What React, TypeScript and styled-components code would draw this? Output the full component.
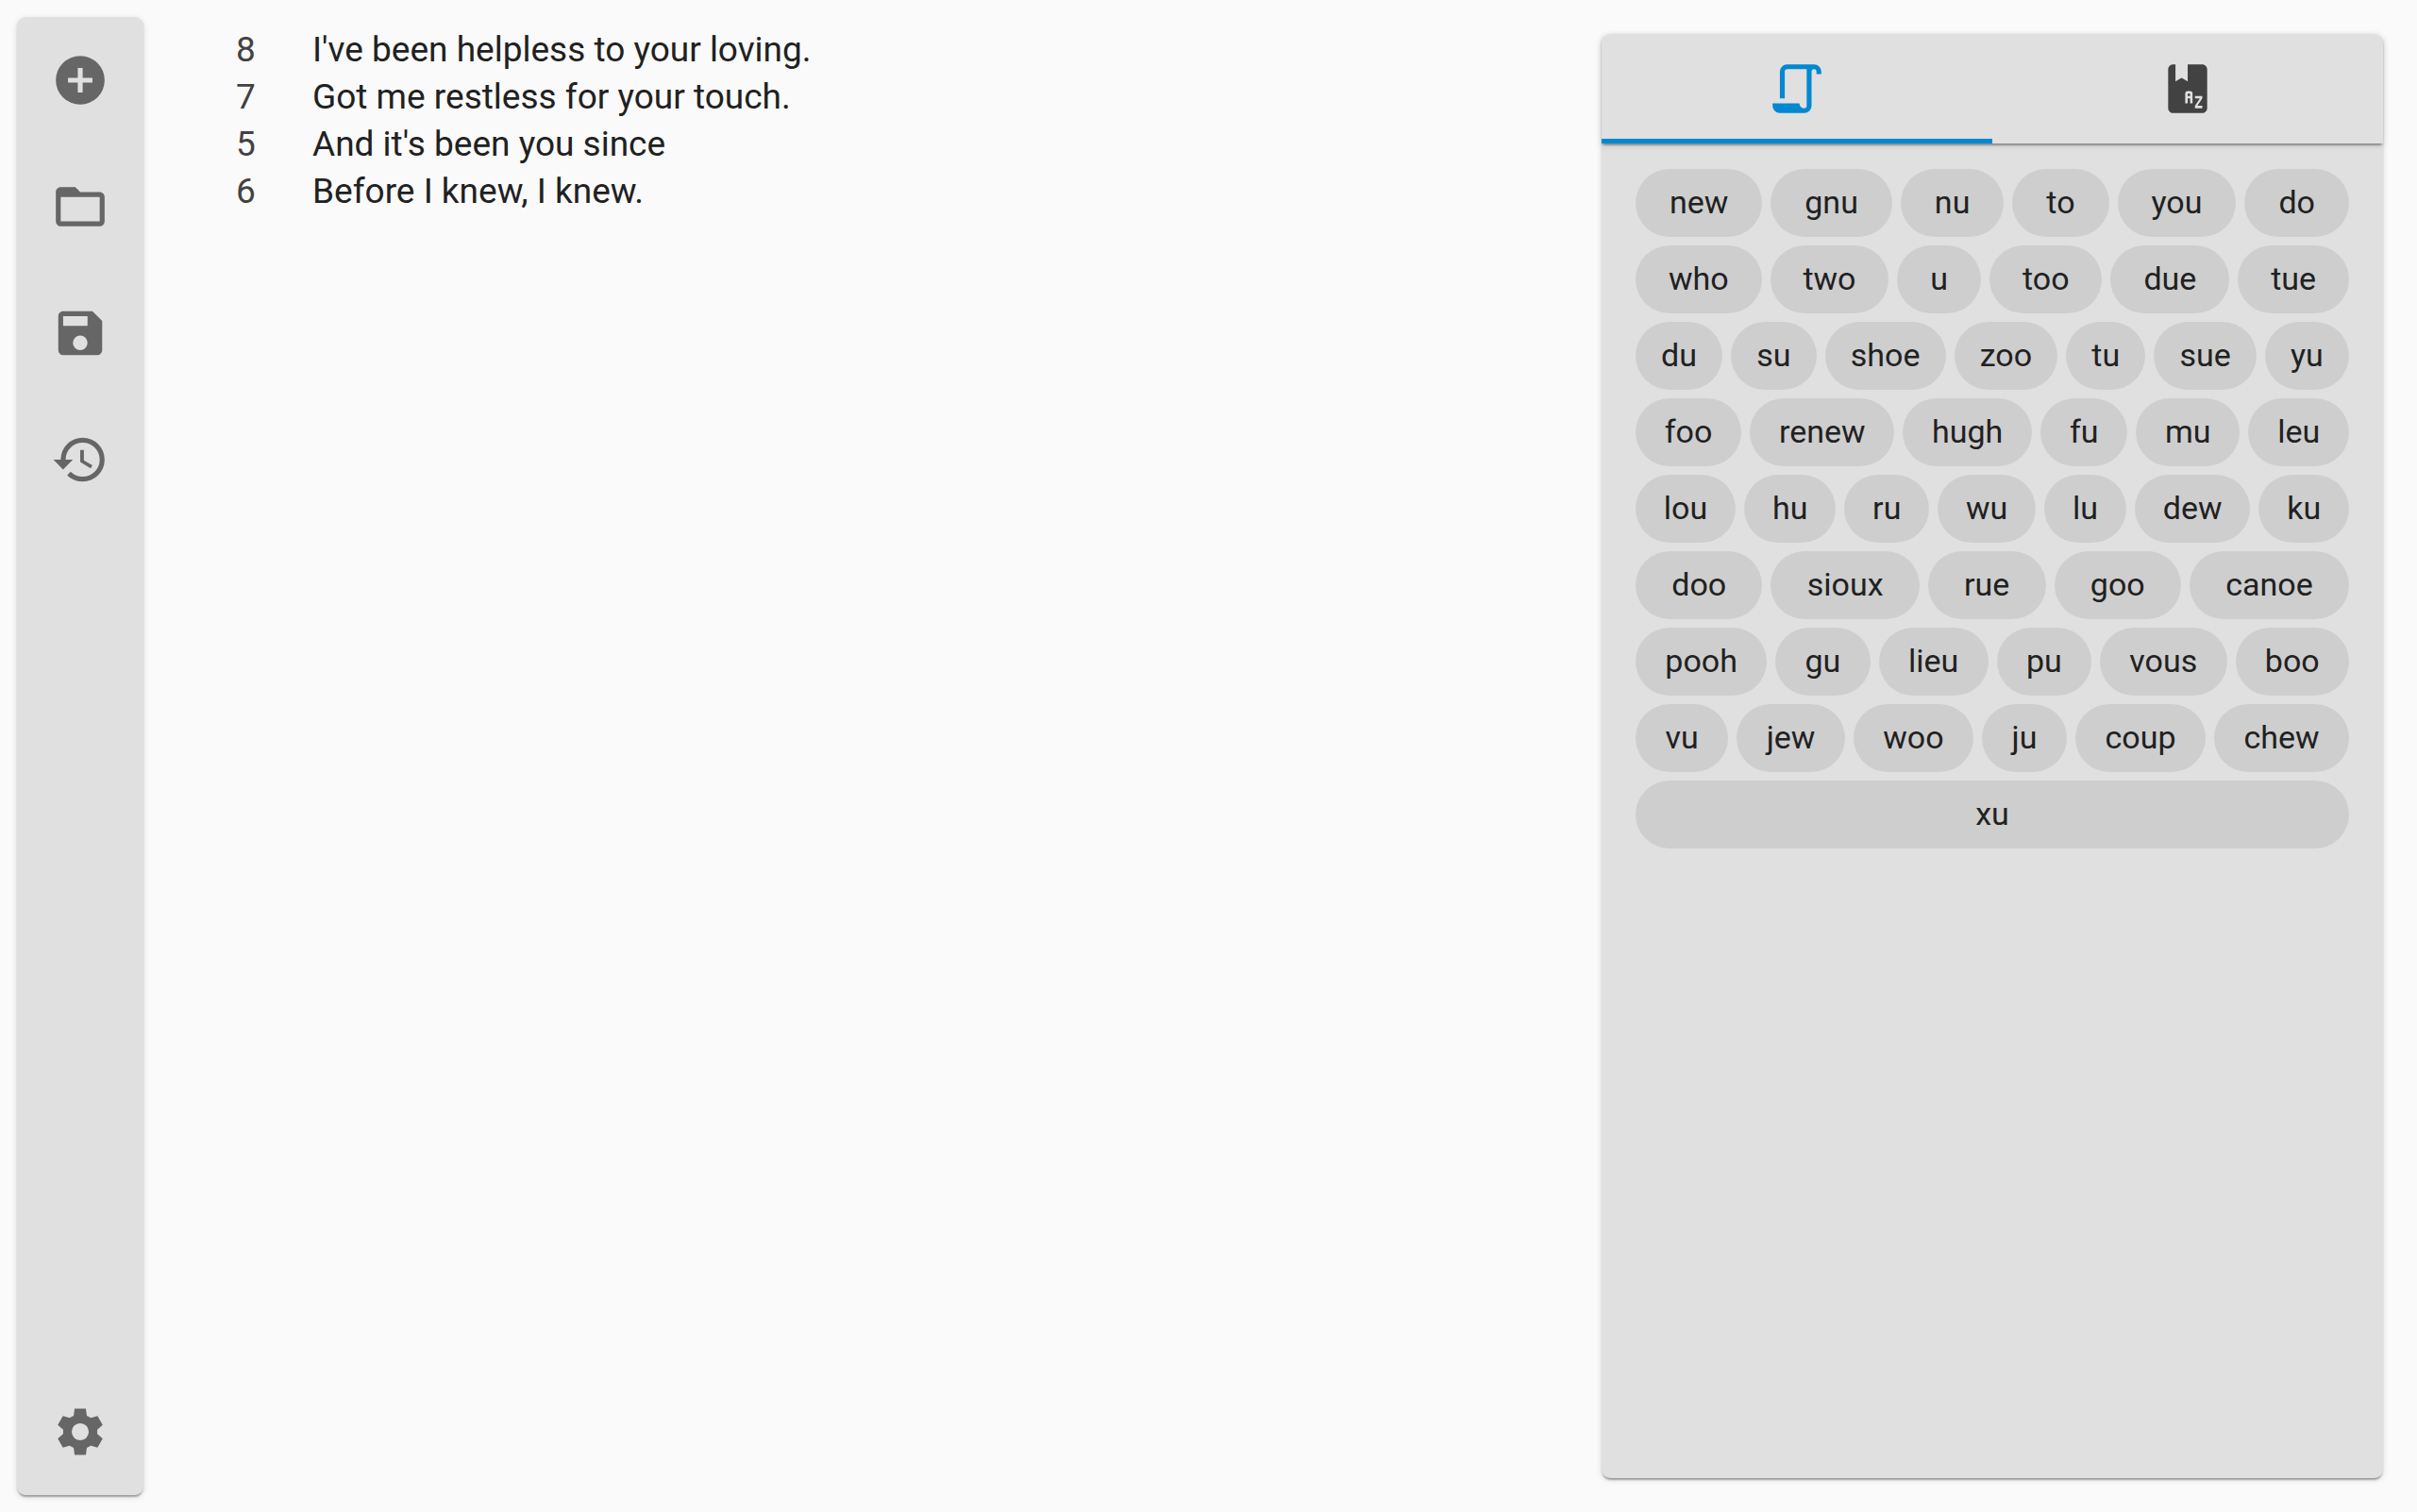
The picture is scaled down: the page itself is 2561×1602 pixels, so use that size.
import React, { useState } from 'react';
import styled, { createGlobalStyle } from 'styled-components';

const GlobalStyle = createGlobalStyle`
  *, *::before, *::after { box-sizing: border-box; }
  body {
    margin: 0;
    background: #fafafa;
    color: #212121;
    font-family: Roboto, "Liberation Sans", sans-serif;
    font-size: 37px;
  }
`;

const raised = '0 4px 2px -2px rgba(0,0,0,.2), 0 2px 2px 0 rgba(0,0,0,.14), 0 2px 7px 0 rgba(0,0,0,.12)';

const Page = styled.div`
  display: flex;
  align-items: stretch;
  height: 100vh;
`;

const Toolbar = styled.nav`
  display: flex;
  flex-direction: column;
  flex: none;
  width: 134px;
  margin: 18px;
  border-radius: 9px;
  background: #e0e0e0;
  box-shadow: ${raised};
`;

const ToolButton = styled.button<{ $last?: boolean }>`
  display: flex;
  align-items: center;
  justify-content: center;
  height: 134px;
  padding: 0;
  border: 0;
  background: none;
  color: #666;
  cursor: pointer;
  margin-top: ${(p) => (p.$last ? 'auto' : '0')};
`;

const Icon = styled.svg`
  display: block;
  width: 62px;
  height: 62px;
  fill: currentColor;
`;

const Editor = styled.main`
  flex: 1;
  min-width: 0;
  padding: 28px 36px 28px 80px;
`;

const Lines = styled.ol`
  margin: 0;
  padding: 0;
  list-style: none;
`;

const Line = styled.li`
  display: flex;
  line-height: 50px;
`;

const Syllables = styled.span`
  flex: none;
  width: 81px;
  color: #424242;
`;

const SidePanel = styled.aside`
  display: flex;
  flex-direction: column;
  flex: none;
  width: 828px;
  margin: 36px;
  border-radius: 9px;
  background: #e0e0e0;
  box-shadow: ${raised};
`;

const Tabs = styled.div`
  display: flex;
  height: 116px;
  border-radius: 9px 9px 0 0;
  box-shadow: ${raised};
`;

const Tab = styled.button<{ $active: boolean }>`
  display: flex;
  flex: 1;
  align-items: center;
  justify-content: center;
  padding: 0;
  border: 0;
  background: none;
  color: ${(p) => (p.$active ? '#0288d1' : '#424242')};
  box-shadow: ${(p) => (p.$active ? 'inset 0 -5px #0288d1' : 'none')};
  cursor: pointer;
`;

const Chips = styled.div`
  display: flex;
  flex-wrap: wrap;
  gap: 9px;
  padding: 27px 36px;
`;

const Chip = styled.button`
  flex: 1 0 auto;
  height: 72px;
  padding: 0 27px 2px;
  border: 0;
  border-radius: 36px;
  background: #cecece;
  color: #212121;
  font: 400 34px/50px Roboto, "Liberation Sans", sans-serif;
  cursor: pointer;
`;

const icons = {
  add: 'M17,13H13V17H11V13H7V11H11V7H13V11H17M12,2A10,10 0 0,0 2,12A10,10 0 0,0 12,22A10,10 0 0,0 22,12A10,10 0 0,0 12,2Z',
  open: 'M20,18H4V8H20M20,6H12L10,4H4C2.89,4 2,4.89 2,6V18A2,2 0 0,0 4,20H20A2,2 0 0,0 22,18V8C22,6.89 21.1,6 20,6Z',
  save: 'M15,9H5V5H15M12,19A3,3 0 0,1 9,16A3,3 0 0,1 12,13A3,3 0 0,1 15,16A3,3 0 0,1 12,19M17,3H5C3.89,3 3,3.9 3,5V19A2,2 0 0,0 5,21H19A2,2 0 0,0 21,19V7L17,3Z',
  history:
    'M13.5,8H12V13L16.28,15.54L17,14.33L13.5,12.25V8M13,3A9,9 0 0,0 4,12H1L4.96,16.03L9,12H6A7,7 0 0,1 13,5A7,7 0 0,1 20,12A7,7 0 0,1 13,19C11.07,19 9.32,18.21 8.06,16.94L6.64,18.36C8.27,20 10.5,21 13,21A9,9 0 0,0 22,12A9,9 0 0,0 13,3',
  settings:
    'M12,15.5A3.5,3.5 0 0,1 8.5,12A3.5,3.5 0 0,1 12,8.5A3.5,3.5 0 0,1 15.5,12A3.5,3.5 0 0,1 12,15.5M19,12.9V11.1L21.2,9.2L19.1,5.5L16.4,6.3L14.7,5.4L14.3,2.5H9.7L9.3,5.4L7.6,6.3L4.9,5.5L2.8,9.2L5,11.1V12.9L2.8,14.8L4.9,18.5L7.6,17.7L9.3,18.6L9.7,21.5H14.3L14.7,18.6L16.4,17.7L19.1,18.5L21.2,14.8Z',
  script:
    'M15,20A1,1 0 0,0 16,19V4H8A1,1 0 0,0 7,5V16H5V5A3,3 0 0,1 8,2H19A3,3 0 0,1 22,5V6H20V5A1,1 0 0,0 19,4A1,1 0 0,0 18,5V19A3,3 0 0,1 15,22H5A3,3 0 0,1 2,19V18H13A2,2 0 0,0 15,20Z',
  dictionary:
    'M5.81,2C4.83,2.09 4,3 4,4V20C4,21.05 4.95,22 6,22H18C19.05,22 20,21.05 20,20V4C20,2.89 19.1,2 18,2H12V9L9.5,7.5L7,9V2H6C5.94,2 5.87,2 5.81,2M12,13H13A1,1 0 0,1 14,14V18H13V16H12V18H11V14A1,1 0 0,1 12,13M12,14V15H13V14H12M15,15H18V16L16,19H18V20H15V19L17,16H15V15Z',
};

type IconName = keyof typeof icons;

const Glyph = ({ name }: { name: IconName }) => (
  <Icon viewBox="0 0 24 24" aria-hidden="true">
    <path d={icons[name]} />
  </Icon>
);

const tools: { icon: IconName; label: string }[] = [
  { icon: 'add', label: 'New' },
  { icon: 'open', label: 'Open' },
  { icon: 'save', label: 'Save' },
  { icon: 'history', label: 'History' },
  { icon: 'settings', label: 'Settings' },
];

const lyrics = [
  { count: 8, text: "I've been helpless to your loving." },
  { count: 7, text: 'Got me restless for your touch.' },
  { count: 5, text: "And it's been you since" },
  { count: 6, text: 'Before I knew, I knew.' },
];

const rhymes =
  'new gnu nu to you do who two u too due tue du su shoe zoo tu sue yu foo renew hugh fu mu leu lou hu ru wu lu dew ku doo sioux rue goo canoe pooh gu lieu pu vous boo vu jew woo ju coup chew xu'.split(' ');

const panels: { icon: IconName; label: string }[] = [
  { icon: 'script', label: 'Rhymes' },
  { icon: 'dictionary', label: 'Dictionary' },
];

export default function App() {
  const [active, setActive] = useState(0);
  return (
    <>
      <GlobalStyle />
      <Page>
        <Toolbar>
          {tools.map((tool) => (
            <ToolButton key={tool.icon} type="button" aria-label={tool.label} $last={tool.icon === 'settings'}>
              <Glyph name={tool.icon} />
            </ToolButton>
          ))}
        </Toolbar>
        <Editor>
          <Lines>
            {lyrics.map((line) => (
              <Line key={line.text}>
                <Syllables>{line.count}</Syllables>
                <span>{line.text}</span>
              </Line>
            ))}
          </Lines>
        </Editor>
        <SidePanel>
          <Tabs role="tablist">
            {panels.map((panel, i) => (
              <Tab
                key={panel.icon}
                type="button"
                role="tab"
                aria-label={panel.label}
                aria-selected={active === i}
                $active={active === i}
                onClick={() => setActive(i)}
              >
                <Glyph name={panel.icon} />
              </Tab>
            ))}
          </Tabs>
          <Chips>
            {rhymes.map((word) => (
              <Chip key={word} type="button">
                {word}
              </Chip>
            ))}
          </Chips>
        </SidePanel>
      </Page>
    </>
  );
}
